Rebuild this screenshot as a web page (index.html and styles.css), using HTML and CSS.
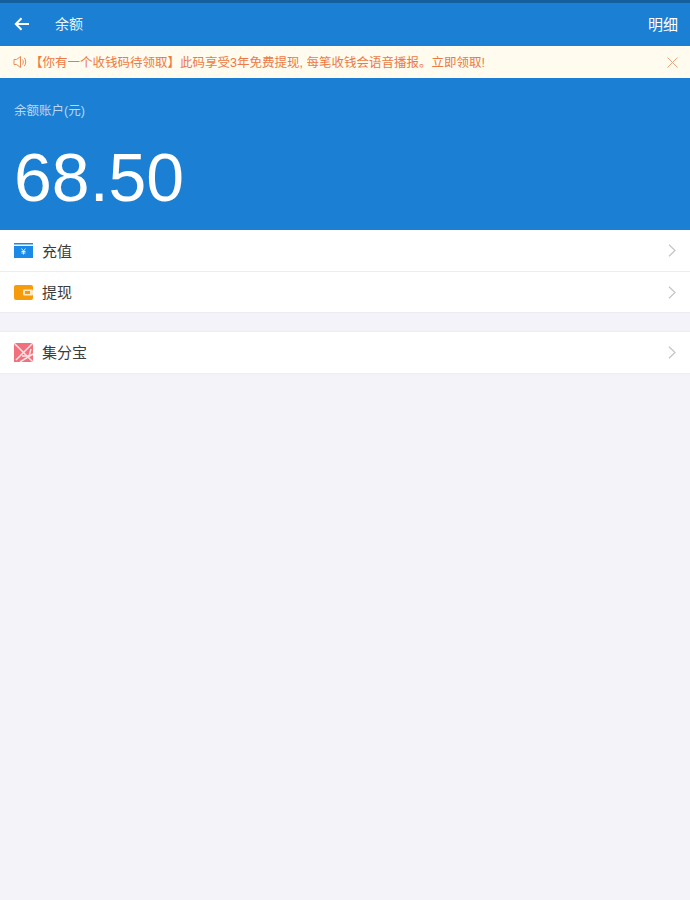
FILE: index.html
```html
<!DOCTYPE html>
<html>
  <head>
    <title>余额</title>
    <link rel="stylesheet" href="styles.css">
  </head>
  <body>
    <div class="header">
      <svg class="back" width="16" height="14" viewBox="0 0 16 14">
        <path d="M15 7H2M7.5 1.200 1.800 7l5.700 5.800" fill="none" stroke="#fff" stroke-width="2"/>
      </svg>
      <div class="title">余额</div>
      <div class="detail">明细</div>
    </div>
    <div class="notice">
      <svg class="horn" width="14" height="14" viewBox="0 0 14 14">
        <path d="M1 4.500h2.500L7.500 1.500v11l-4-3H1zM9.500 4.500c1 1.500 1 3.500 0 5M11.300 2.800c1.900 2.500 1.900 5.900 0 8.400" fill="none" stroke="#ef8a55" stroke-width="1"/>
      </svg>
      <div class="notice-text">【你有一个收钱码待领取】此码享受3年免费提现, 每笔收钱会语音播报。立即领取!</div>
      <svg class="close" width="11" height="11" viewBox="0 0 11 11">
        <path d="M.5.5l10 10M10.500.5l-10 10" fill="none" stroke="#f0a27c" stroke-width="1"/>
      </svg>
    </div>
    <div class="balance">
      <div class="balance-label">余额账户(元)</div>
      <div class="balance-num">68.50</div>
    </div>
    <div class="group">
      <div class="row">
        <svg class="icon" width="19" height="15" viewBox="0 0 19 15">
          <rect width="19" height="1.500" fill="#1a8ae6"/>
          <rect y="3" width="19" height="12" fill="#1a8ae6"/>
          <path d="M7.500 5.500l2 2.500 2-2.500M9.500 8v3.500M7.500 8.500h4M7.500 10h4" fill="none" stroke="#dcedfb" stroke-width="1"/>
        </svg>
        <div class="row-name">充值</div>
        <svg class="arrow" width="8" height="13" viewBox="0 0 8 13">
          <path d="M1 .7l6 5.800-6 5.800" fill="none" stroke="#c6c6ca" stroke-width="1.300"/>
        </svg>
      </div>
      <div class="row">
        <svg class="icon" width="19" height="15" viewBox="0 0 19 15">
          <rect width="19" height="15" rx="2" fill="#f59c0c"/>
          <rect x="9" y="4.500" width="10" height="6" rx="1" fill="#ffe9c4"/>
          <rect x="11" y="6" width="5" height="3" fill="#f59c0c"/>
        </svg>
        <div class="row-name">提现</div>
        <svg class="arrow" width="8" height="13" viewBox="0 0 8 13">
          <path d="M1 .7l6 5.800-6 5.800" fill="none" stroke="#c6c6ca" stroke-width="1.300"/>
        </svg>
      </div>
    </div>
    <div class="group second">
      <div class="row">
        <svg class="icon" width="19" height="19" viewBox="0 0 19 19">
          <rect width="19" height="19" fill="#f2707c"/>
          <path d="M0 0l19 19M19 0 2 17M6 19l13-8M8 13h7l2-7" fill="none" stroke="#fde3e5" stroke-width="1.500"/>
        </svg>
        <div class="row-name">集分宝</div>
        <svg class="arrow" width="8" height="13" viewBox="0 0 8 13">
          <path d="M1 .7l6 5.800-6 5.800" fill="none" stroke="#c6c6ca" stroke-width="1.300"/>
        </svg>
      </div>
    </div>
  </body>
</html>
```

FILE: styles.css
```css
body {
  margin: 0;
  min-height: 900px;
  background-color: #f3f3f9;
  font-family: "Liberation Sans", "Noto Sans CJK SC", sans-serif;
}
.header {
  display: flex;
  align-items: center;
  height: 43px;
  padding: 0 12px 0 14px;
  background-color: #1b80d3;
  border-top: 3px solid #14609f;
  color: #fff;
}
.back {
  margin-top: -1px;
}
.title {
  margin-left: 25px;
  margin-bottom: 4px;
  font-size: 14px;
  color: #eaf3fb;
}
.detail {
  margin-left: auto;
  margin-bottom: 3px;
  font-size: 15px;
}
.notice {
  display: flex;
  align-items: center;
  height: 32px;
  padding: 0 12px 0 13px;
  background-color: #fffbee;
}
.notice-text {
  flex: 1;
  margin-left: 3px;
  margin-bottom: 1px;
  font-size: 12.5px;
  color: #ec7a45;
  white-space: nowrap;
}
.balance {
  height: 152px;
  padding: 0 14px;
  background-color: #1b80d3;
  color: #fff;
}
.balance-label {
  padding-top: 25px;
  font-size: 12.5px;
  line-height: 16px;
  color: #b9d8f2;
}
.balance-num {
  margin-top: 18px;
  font-size: 68px;
  line-height: 80px;
}
.group {
  background-color: #fff;
}
.group.second {
  margin-top: 18px;
  border-top: 1px solid #ececf2;
}
.row {
  display: flex;
  align-items: center;
  height: 41px;
  padding: 0 14px;
  border-bottom: 1px solid #ececf2;
}
.row + .row {
  height: 40px;
}
.row + .row .row-name,
.second .row-name {
  margin-bottom: 2px;
}
.icon {
  flex-shrink: 0;
}
.row-name {
  margin-left: 9px;
  font-size: 15px;
  color: #3c3c3c;
}
.arrow {
  margin-left: auto;
}
```
